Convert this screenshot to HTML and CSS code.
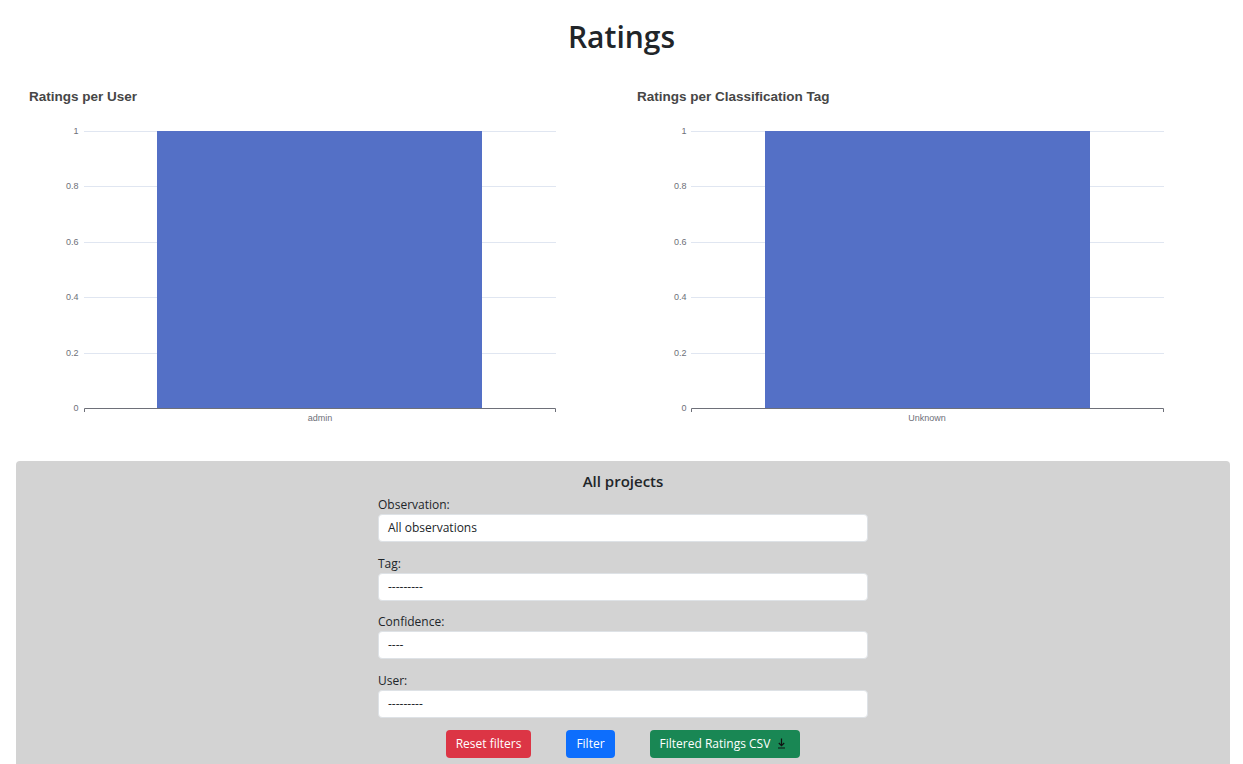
FILE: index.html
```html
<!DOCTYPE html>
<html lang="en">
<head>
<meta charset="utf-8">
<title>Ratings</title>
<link rel="stylesheet" href="styles.css">
</head>
<body>
<h1 class="page-title">Ratings</h1>

<div class="charts">
  <div class="chart">
    <svg class="chart-svg" width="608" height="360" viewBox="0 0 608 360">
      <text class="chart-title" x="8" y="21">Ratings per User</text>
      <g class="grid">
        <line x1="63" x2="535" y1="51.5" y2="51.5"/>
        <line x1="63" x2="535" y1="106.5" y2="106.5"/>
        <line x1="63" x2="535" y1="162.5" y2="162.5"/>
        <line x1="63" x2="535" y1="217.5" y2="217.5"/>
        <line x1="63" x2="535" y1="273.5" y2="273.5"/>
      </g>
      <g class="ylab">
        <text x="57.5" y="54">1</text>
        <text x="57.5" y="109">0.8</text>
        <text x="57.5" y="165">0.6</text>
        <text x="57.5" y="220">0.4</text>
        <text x="57.5" y="276">0.2</text>
        <text x="57.5" y="331">0</text>
      </g>
      <rect class="bar" x="136" y="51" width="325" height="277"/>
      <path class="axis" d="M63.5 332V328.5H534.5V332"/>
      <text class="xlab" x="299" y="341">admin</text>
    </svg>
  </div>
  <div class="chart">
    <svg class="chart-svg" width="608" height="360" viewBox="0 0 608 360">
      <text class="chart-title" x="8" y="21">Ratings per Classification Tag</text>
      <g class="grid">
        <line x1="62" x2="535" y1="51.5" y2="51.5"/>
        <line x1="62" x2="535" y1="106.5" y2="106.5"/>
        <line x1="62" x2="535" y1="162.5" y2="162.5"/>
        <line x1="62" x2="535" y1="217.5" y2="217.5"/>
        <line x1="62" x2="535" y1="273.5" y2="273.5"/>
      </g>
      <g class="ylab">
        <text x="57.5" y="54">1</text>
        <text x="57.5" y="109">0.8</text>
        <text x="57.5" y="165">0.6</text>
        <text x="57.5" y="220">0.4</text>
        <text x="57.5" y="276">0.2</text>
        <text x="57.5" y="331">0</text>
      </g>
      <rect class="bar" x="136" y="51" width="325" height="277"/>
      <path class="axis" d="M62.5 332V328.5H534.5V332"/>
      <text class="xlab" x="298" y="341">Unknown</text>
    </svg>
  </div>
</div>

<section class="panel">
  <h5 class="panel-title">All projects</h5>
  <form class="filters">
    <div class="group">
      <label class="label">Observation:</label>
      <div class="field">All observations</div>
    </div>
    <div class="group">
      <label class="label">Tag:</label>
      <div class="field">---------</div>
    </div>
    <div class="group">
      <label class="label">Confidence:</label>
      <div class="field">----</div>
    </div>
    <div class="group">
      <label class="label">User:</label>
      <div class="field">---------</div>
    </div>
    <div class="buttons">
      <button type="button" class="btn btn-red">Reset filters</button>
      <button type="button" class="btn btn-blue">Filter</button>
      <button type="button" class="btn btn-green">Filtered Ratings CSV
        <svg class="dl-icon" width="9" height="11" viewBox="0 0 9 11"><path d="M4.5 0.5V7.5M1.8 5L4.5 7.7L7.2 5M1 10H8"/></svg>
      </button>
    </div>
  </form>
</section>
</body>
</html>
```

FILE: styles.css
```css
html, body {
  margin: 0;
  padding: 0;
  background: #ffffff;
}

body {
  font-family: "Open Sans", "Noto Sans", sans-serif;
  color: #212529;
  font-size: 12px;
}

.page-title {
  margin: 0;
  padding-top: 19px;
  font-size: 30px;
  line-height: 36px;
  font-weight: 600;
  text-align: center;
  color: #212529;
}

.charts {
  display: grid;
  grid-template-columns: 608px 608px;
  padding-left: 21px;
  margin-top: 25px;
  height: 360px;
}

.chart-svg {
  display: block;
  font-family: "Liberation Sans", Arial, sans-serif;
}

.chart-title {
  font-size: 13.5px;
  font-weight: bold;
  fill: #464646;
}

.grid line {
  stroke: #E0E6F1;
  stroke-width: 1;
}

.ylab text {
  font-size: 9px;
  fill: #6E7079;
  text-anchor: end;
}

.xlab {
  font-size: 9px;
  fill: #6E7079;
  text-anchor: middle;
}

.bar {
  fill: #5470c6;
}

.axis {
  fill: none;
  stroke: #6E7079;
  stroke-width: 1;
}

.panel {
  margin: 21px 13px 0 16px;
  background: #d3d3d3;
  border-radius: 4px;
  padding: 11px 0 20px;
}

.panel-title {
  margin: 0 0 5px;
  font-size: 15px;
  line-height: 18px;
  font-weight: 600;
  text-align: center;
  color: #212529;
}

.filters {
  width: 490px;
  margin: 0 auto;
}

.group {
  margin-bottom: 11.67px;
}

.label {
  display: block;
  line-height: 18px;
  padding-top: 1px;
  font-size: 12px;
}

.field {
  box-sizing: border-box;
  height: 28px;
  padding: 4px 9px;
  line-height: 18px;
  background: #ffffff;
  border: 1px solid #dee2e6;
  border-radius: 4px;
  font-size: 12px;
  color: #212529;
}

.buttons {
  display: flex;
  justify-content: center;
  gap: 35px;
  margin-top: 1px;
}

.btn {
  box-sizing: border-box;
  height: 28px;
  padding: 0 9px;
  border: 1px solid transparent;
  border-radius: 4px;
  font-family: "Open Sans", "Noto Sans", sans-serif;
  font-size: 12px;
  line-height: 18px;
  color: #ffffff;
  display: inline-flex;
  align-items: center;
  gap: 7px;
}

.btn-red { background: #dc3545; }
.btn-blue { background: #0d6efd; }
.btn-green {
  background: #198754;
  padding-right: 13px;
}

.dl-icon path {
  fill: none;
  stroke: #111111;
  stroke-width: 1.2;
}
```
